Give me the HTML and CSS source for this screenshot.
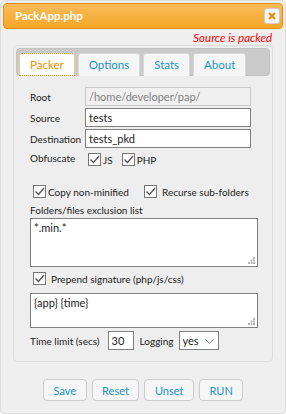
FILE: index.html
```html
<!DOCTYPE html>
<html lang="en">
<head>
  <meta charset="UTF-8" />
  <title>PackApp.php</title>
  <link rel="stylesheet" href="styles.css">
</head>
<body>

  <div class="dialog">

    <div class="titlebar">
      <span class="title">PackApp.php</span>
      <button class="close" title="close">
        <svg width="8" height="8" viewBox="0 0 8 8"><path d="M1 1L7 7M7 1L1 7" stroke="#ef8c08" stroke-width="2.2" /></svg>
      </button>
    </div>

    <div class="content">
      <div class="status">Source is packed</div>

      <div class="tabs">
        <ul class="tab-nav">
          <li class="tab active">Packer</li>
          <li class="tab">Options</li>
          <li class="tab">Stats</li>
          <li class="tab">About</li>
        </ul>

        <div class="tab-panel">
          <div class="fields">
            <label>Root</label>
            <input type="text" value="/home/developer/pap/" disabled />
            <label>Source</label>
            <input type="text" value="tests" />
            <label>Destination</label>
            <input type="text" value="tests_pkd" />
            <label>Obfuscate</label>
            <div class="checks">
              <span class="check"><span class="box"><svg width="11" height="11" viewBox="0 0 11 11"><path d="M1.5 5.5L4.5 8.5L10 2" fill="none" stroke="#555" stroke-width="1.4" /></svg></span>JS</span>
              <span class="check"><span class="box"><svg width="11" height="11" viewBox="0 0 11 11"><path d="M1.5 5.5L4.5 8.5L10 2" fill="none" stroke="#555" stroke-width="1.4" /></svg></span>PHP</span>
            </div>
          </div>

          <div class="option-row">
            <span class="check"><span class="box"><svg width="11" height="11" viewBox="0 0 11 11"><path d="M1.5 5.5L4.5 8.5L10 2" fill="none" stroke="#555" stroke-width="1.4" /></svg></span>Copy non-minified</span>
            <span class="check recurse"><span class="box"><svg width="11" height="11" viewBox="0 0 11 11"><path d="M1.5 5.5L4.5 8.5L10 2" fill="none" stroke="#555" stroke-width="1.4" /></svg></span>Recurse sub-folders</span>
          </div>

          <div class="block-label">Folders/files exclusion list</div>
          <div class="textbox exclude">
            <textarea>*.min.*</textarea>
            <svg class="grip" width="7" height="7" viewBox="0 0 7 7" fill="#b5b5b5"><rect x="5" y="0" width="2" height="2" /><rect x="2.5" y="2.5" width="2" height="2" /><rect x="5" y="2.5" width="2" height="2" /><rect x="0" y="5" width="2" height="2" /><rect x="2.5" y="5" width="2" height="2" /><rect x="5" y="5" width="2" height="2" /></svg>
          </div>

          <div class="sign-row">
            <span class="check sign"><span class="box"><svg width="11" height="11" viewBox="0 0 11 11"><path d="M1.5 5.5L4.5 8.5L10 2" fill="none" stroke="#555" stroke-width="1.4" /></svg></span>Prepend signature (php/js/css)</span>
          </div>
          <div class="textbox signature">
            <textarea>{app} {time}</textarea>
            <svg class="grip" width="7" height="7" viewBox="0 0 7 7" fill="#b5b5b5"><rect x="5" y="0" width="2" height="2" /><rect x="2.5" y="2.5" width="2" height="2" /><rect x="5" y="2.5" width="2" height="2" /><rect x="0" y="5" width="2" height="2" /><rect x="2.5" y="5" width="2" height="2" /><rect x="5" y="5" width="2" height="2" /></svg>
          </div>

          <div class="inline-row">
            <label>Time limit (secs)</label>
            <input type="text" class="secs" value="30" />
            <label class="logging">Logging</label>
            <div class="select">
              <select><option>yes</option><option>no</option></select>
              <svg width="9" height="5" viewBox="0 0 9 5"><path d="M0.5 0.5L4.5 4.5L8.5 0.5" fill="none" stroke="#777" /></svg>
            </div>
          </div>
        </div>
      </div>

      <div class="actions">
        <button>Save</button>
        <button>Reset</button>
        <button>Unset</button>
        <button>RUN</button>
      </div>
    </div>

  </div>

</body>
</html>
```

FILE: styles.css
```css
:root {
  --text: #222;
  --blue: #1c94c4;
  --orange: #eb8f00;
  --border: #dddddd;
  --panel: #eeeeee;
}

* {
  box-sizing: border-box;
}

body {
  margin: 0;
  font-family: 'Lato', sans-serif;
  font-size: 10px;
  line-height: 12px;
  color: var(--text);
  background: #fff;
}

.dialog {
  width: 286px;
  height: 414px;
  border: 1px solid var(--border);
  border-radius: 4px;
  background: #efefef;
  padding: 2px;
}

.titlebar {
  display: flex;
  align-items: center;
  justify-content: space-between;
  height: 26px;
  padding: 0 2px 0 11px;
  background: linear-gradient(#f9bb5a, #f6a828);
  border: 1px solid #e78f08;
  border-radius: 4px;
  color: white;
}

.title {
  font-size: 11.5px;
  font-weight: 700;
}

.close {
  display: flex;
  align-items: center;
  justify-content: center;
  width: 16px;
  height: 16px;
  padding: 0;
  background: #f6f6f6;
  border: 1px solid #ccc;
  border-radius: 3px;
}

.content {
  padding: 0 10px;
}

.status {
  text-align: right;
  color: #f00;
  font-style: italic;
  font-size: 11.5px;
  line-height: 15px;
  padding: 1px 1px 0 0;
}

.tabs {
  border: 1px solid var(--border);
  border-radius: 4px;
  background: var(--panel);
  padding: 2px;
  height: 317px;
}

.tab-nav {
  display: flex;
  gap: 3px;
  margin: 0;
  padding: 4px 2px 0;
  list-style: none;
  background: #cacaca;
  border: 1px solid #c2c2c2;
  border-radius: 4px;
  height: 28px;
}

.tab {
  height: 23px;
  line-height: 21px;
  padding: 0 10px;
  font-size: 11.5px;
  color: var(--blue);
  background: #f6f6f6;
  border: 1px solid #d8d8d8;
  border-bottom: none;
  border-radius: 3px 3px 0 0;
}

.tab.active {
  color: var(--orange);
  background: white;
  border: 1px dotted var(--orange);
}

.tab-panel {
  padding: 11px 0 0 14px;
}

.fields {
  display: grid;
  grid-template-columns: 55px 166px;
  row-gap: 2px;
  align-items: center;
}

input[type="text"] {
  height: 19px;
  padding: 0 3px;
  font-family: inherit;
  font-size: 11px;
  color: var(--text);
  background: white;
  border: 1px solid #808080;
  border-radius: 0;
  outline: none;
}

input[disabled] {
  color: #808080;
  background: #f0f0f0;
  border-color: #c8c8c8;
}

.checks {
  display: flex;
  gap: 9px;
  padding: 3px 0 0 3px;
}

.check {
  display: inline-flex;
  align-items: flex-end;
  white-space: nowrap;
}

.box {
  display: inline-flex;
  align-items: center;
  justify-content: center;
  width: 13px;
  height: 13px;
  margin-right: 2px;
  background: white;
  border: 1px solid #777;
}

.option-row {
  display: grid;
  grid-template-columns: 111px auto;
  justify-content: start;
  margin: 19px 0 0 3px;
}

.check.recurse .box,
.check.sign .box {
  margin-right: 5px;
}

.block-label {
  margin-top: 4px;
  line-height: 16px;
}

.textbox {
  position: relative;
  width: 228px;
}

.textbox textarea {
  display: block;
  width: 100%;
  padding: 2px 3px;
  font-family: inherit;
  font-size: 11px;
  line-height: 14px;
  color: var(--text);
  background: white;
  border: 1px solid #808080;
  resize: none;
  outline: none;
}

.exclude textarea {
  height: 49px;
}

.signature textarea {
  height: 35px;
}

.grip {
  position: absolute;
  right: 3px;
  bottom: 3px;
}

.sign-row {
  margin: 5px 0 0 3px;
}

.sign-row + .textbox {
  margin-top: 7px;
}

.inline-row {
  display: flex;
  align-items: center;
  margin-top: 3px;
  white-space: nowrap;
}

.secs {
  width: 26px;
  margin-left: 8px;
}

.logging {
  margin-left: 6px;
}

.select {
  position: relative;
  margin-left: 5px;
}

.select select {
  appearance: none;
  width: 40px;
  height: 19px;
  padding: 0 3px;
  font-family: inherit;
  font-size: 11px;
  color: var(--text);
  background: white;
  border: 1px solid #808080;
  border-radius: 0;
}

.select svg {
  position: absolute;
  right: 5px;
  top: 8px;
  pointer-events: none;
}

.actions {
  display: flex;
  gap: 5px;
  margin-top: 17px;
  padding-left: 30px;
}

.actions button {
  height: 22px;
  padding: 0 9.5px;
  font-family: inherit;
  font-size: 11px;
  color: var(--blue);
  background: #f6f6f6;
  border: 1px solid #cccccc;
  border-radius: 4px;
}
```
